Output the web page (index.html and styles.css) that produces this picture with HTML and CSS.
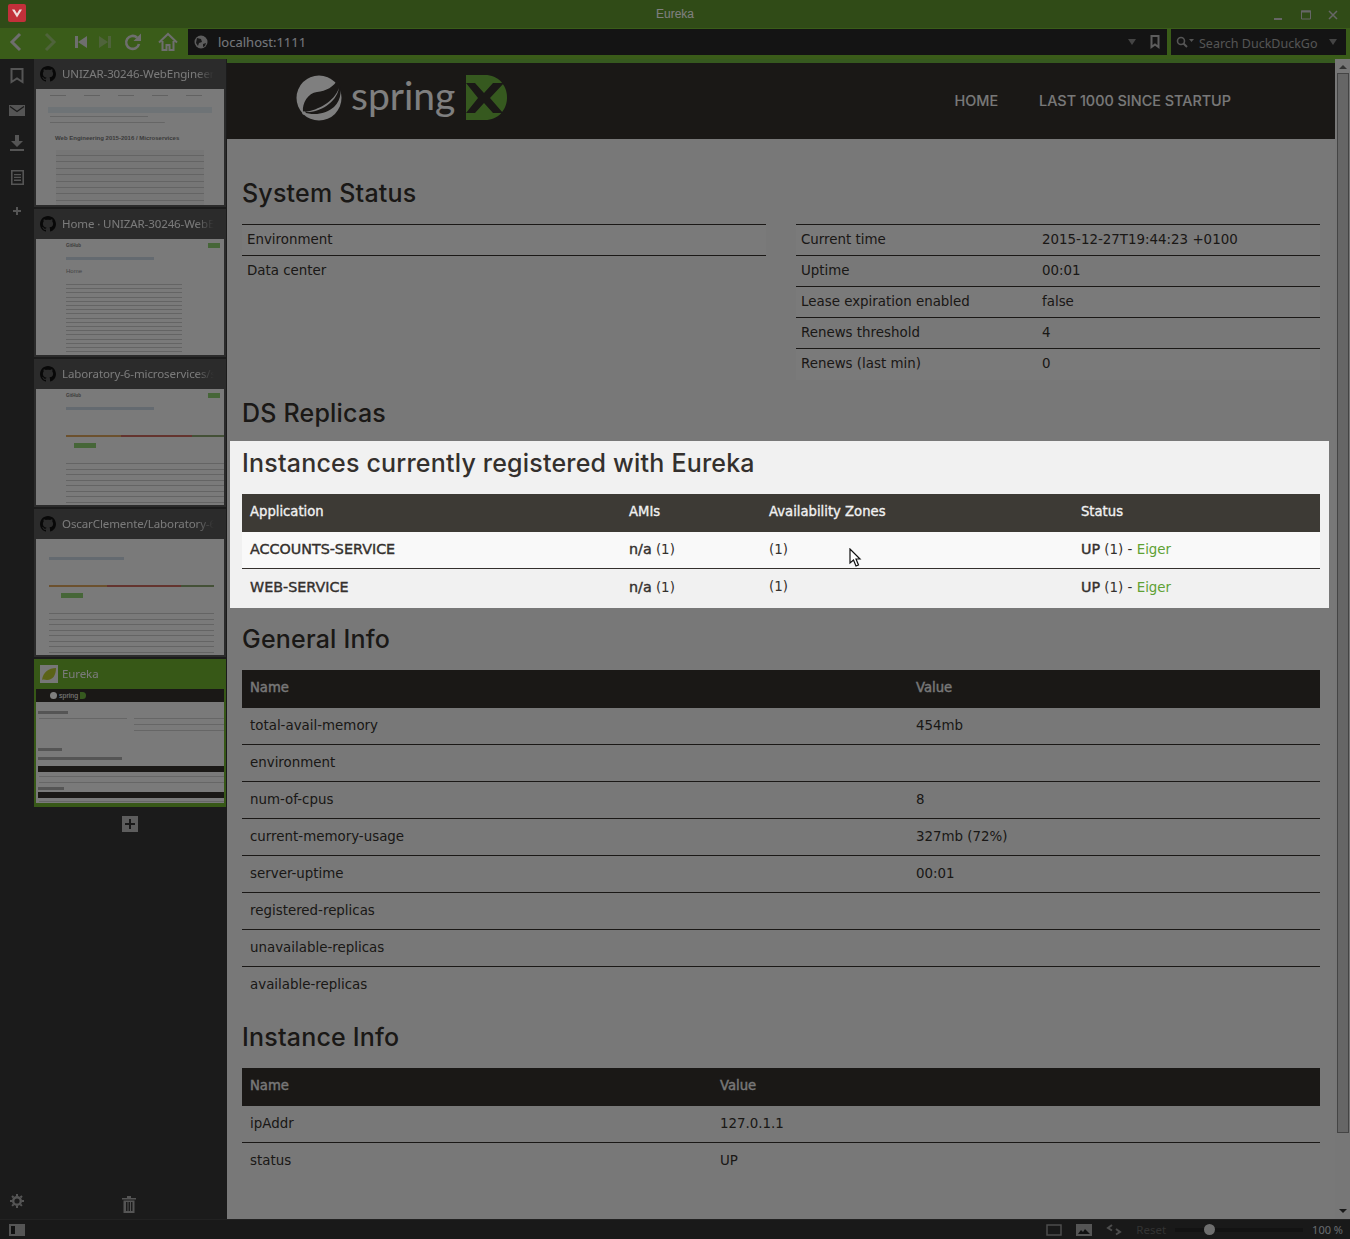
FILE: index.html
```html
<!DOCTYPE html>
<html lang="en">

<head>
 <meta charset="UTF-8">
 <title>Eureka</title>
 <link rel="stylesheet" href="styles.css">
</head>

<body>

 <header class="titlebar">
  <svg class="logo" viewBox="0 0 18 18" width="18" height="18"><rect width="18" height="18" rx="2" fill="#c2303a"/><path d="M4 5.500l5 8 5-8h-2.600L9 9.500 6.600 5.500z" fill="#f0dcdc"/></svg>
  <span class="window-title">Eureka</span>
  <div class="window-btns">
   <svg viewBox="0 0 12 12" width="12" height="12"><rect x="1" y="9" width="8" height="2" fill="#ccc"/></svg>
   <svg viewBox="0 0 12 12" width="12" height="12"><path d="M1.500 2h9v8h-9z" fill="none" stroke="#ccc"/><rect x="1" y="1.500" width="10" height="2" fill="#ccc"/></svg>
   <svg viewBox="0 0 12 12" width="12" height="12"><path d="M2 2l8 8M10 2l-8 8" stroke="#ccc" stroke-width="1.500"/></svg>
  </div>
 </header>

 <div class="toolbar">
  <div class="nav-btns">
   <svg class="btn" viewBox="0 0 22 22" width="22" height="22"><path d="M15 3l-8 8 8 8" fill="none" stroke="#ddd" stroke-width="3"/></svg>
   <svg class="btn off" viewBox="0 0 22 22" width="22" height="22"><path d="M8 3l8 8-8 8" fill="none" stroke="#ddd" stroke-width="3"/></svg>
   <svg class="btn first" viewBox="0 0 14 14" width="14" height="14"><path d="M1 1h3v12H1zM13 1v12L4 7z" fill="#ddd"/></svg>
   <svg class="btn off last" viewBox="0 0 14 14" width="14" height="14"><path d="M13 1h-3v12h3zM1 1v12l9-6z" fill="#ddd"/></svg>
   <svg class="btn" viewBox="0 0 20 20" width="20" height="20"><path d="M16 12a6.500 6.500 0 1 1-2-6.500" fill="none" stroke="#ddd" stroke-width="2.600"/><path d="M18 1.500V9h-7.500z" fill="#ddd"/></svg>
   <svg class="btn home" viewBox="0 0 20 20" width="20" height="20"><path d="M1 10.500L10 2l9 8.500M4.500 9v9h4v-5h3v5h4V9" fill="none" stroke="#ddd" stroke-width="2"/></svg>
  </div>
  <div class="address">
   <svg viewBox="0 0 14 14" width="14" height="14"><circle cx="7" cy="7" r="6.500" fill="#bbb"/><path d="M3 3l4 1 1 3-3 1-1 3-2-3zM9 9l3-1-1 3-2 1z" fill="#333"/></svg>
   <span class="url">localhost:1111</span>
   <span class="caret"></span>
   <svg viewBox="0 0 10 14" width="10" height="14"><path d="M1.500 1h7v11L5 9.500 1.500 12z" fill="none" stroke="#bbb" stroke-width="2"/></svg>
  </div>
  <div class="search">
   <svg viewBox="0 0 18 12" width="18" height="12"><circle cx="5" cy="5" r="3.500" fill="none" stroke="#aaa" stroke-width="1.600"/><path d="M7.500 7.500L11 11" stroke="#aaa" stroke-width="2"/><path d="M13 3h5l-2.500 3z" fill="#aaa"/></svg>
   <span class="search-text">Search DuckDuckGo</span>
   <span class="caret"></span>
  </div>
 </div>

 <div class="workspace">
  <aside class="rail">
   <svg viewBox="0 0 14 16" width="14" height="16"><path d="M1.500 1h11v13L7 10.500 1.500 14z" fill="none" stroke="#aaa" stroke-width="2"/></svg>
   <svg viewBox="0 0 16 11" width="16" height="11"><rect width="16" height="11" fill="#aaa"/><path d="M1 1.500l7 5 7-5" fill="none" stroke="#363636" stroke-width="1.300"/></svg>
   <svg viewBox="0 0 14 16" width="14" height="16"><path d="M5 0h4v6h4L7 12 1 6h4zM0 14h14v2H0z" fill="#aaa"/></svg>
   <svg viewBox="0 0 13 15" width="13" height="15"><path d="M.8.800h11.400v13.400H.8z" fill="none" stroke="#aaa" stroke-width="1.600"/><path d="M3 4h7v1.300H3zM3 6.800h7v1.300H3zM3 9.600h7v1.300H3z" fill="#aaa"/></svg>
   <svg viewBox="0 0 10 10" width="10" height="10"><path d="M4 1h2v3h3v2H6v3H4V6H1V4h3z" fill="#aaa"/></svg>
   <svg class="gear" viewBox="0 0 14 14" width="14" height="14"><circle cx="7" cy="7" r="3.800" fill="none" stroke="#aaa" stroke-width="2.400"/><path d="M7 0v14M0 7h14M2 2l10 10M12 2L2 12" stroke="#aaa" stroke-width="2" stroke-dasharray="2.200 9.600 2.200"/></svg>
  </aside>

  <aside class="tabs">
   <div class="tab">
    <div class="tab-head"><svg class="gh" viewBox="0 0 16 16" width="16" height="16"><use href="#octocat"/></svg><span class="tab-title">UNIZAR-30246-WebEngineer</span></div>
    <div class="thumb thumb-list">
     <div class="mini-bar"></div>
     <div class="mini-note"></div>
     <p class="mini-heading">Web Engineering 2015-2016 / Microservices</p>
     <div class="mini-lines"></div>
    </div>
   </div>
   <div class="tab">
    <div class="tab-head"><svg class="gh" viewBox="0 0 16 16" width="16" height="16"><use href="#octocat"/></svg><span class="tab-title">Home · UNIZAR-30246-WebE</span></div>
    <div class="thumb thumb-wiki">
     <div class="mini-top"><span class="mini-hub">GitHub</span><span class="mini-go"></span></div>
     <div class="mini-crumb"></div>
     <p class="mini-title">Home</p>
     <div class="mini-para"></div>
    </div>
   </div>
   <div class="tab">
    <div class="tab-head"><svg class="gh" viewBox="0 0 16 16" width="16" height="16"><use href="#octocat"/></svg><span class="tab-title">Laboratory-6-microservices/s</span></div>
    <div class="thumb thumb-repo">
     <div class="mini-top"><span class="mini-hub">GitHub</span><span class="mini-go"></span></div>
     <div class="mini-crumb"></div>
     <div class="mini-colors"></div>
     <div class="mini-btn"></div>
     <div class="mini-files"></div>
    </div>
   </div>
   <div class="tab">
    <div class="tab-head"><svg class="gh" viewBox="0 0 16 16" width="16" height="16"><use href="#octocat"/></svg><span class="tab-title">OscarClemente/Laboratory-6</span></div>
    <div class="thumb thumb-repo thumb-fork">
     <div class="mini-top"></div>
     <div class="mini-crumb"></div>
     <div class="mini-colors"></div>
     <div class="mini-btn"></div>
     <div class="mini-files"></div>
    </div>
   </div>
   <div class="tab tab-active">
    <div class="tab-head">
     <svg class="favicon" viewBox="0 0 18 18" width="18" height="18"><rect width="18" height="18" fill="#eee"/><path d="M2 15C3 7 9 3 16 3c0 7-3 12-9 12-2 0-3-1-5 0z" fill="#b7c62e"/></svg>
     <span class="tab-title">Eureka</span>
    </div>
    <div class="thumb thumb-eureka">
     <div class="mini-nav"><span class="mini-leaf"></span><span class="mini-spring">spring</span><span class="mini-x"></span></div>
     <div class="mini-sections"></div>
    </div>
   </div>
   <div class="new-tab"><svg viewBox="0 0 16 16" width="16" height="16"><rect width="16" height="16" fill="#bbb"/><path d="M7 3h2v4h4v2H9v4H7V9H3V7h4z" fill="#333"/></svg></div>
   <svg class="trash" viewBox="0 0 14 17" width="14" height="17"><path d="M0 2h14v1.500H0zM5 0h4v2H5zM1.500 4.500h11V17h-11zM4 6v9h1.500V6zM6.500 6v9h1.500V6zM9 6v9h1.500V6z" fill="#aaa" fill-rule="evenodd"/></svg>
  </aside>

  <main class="page">
   <div class="page-scroll">
    <nav class="brand-bar">
     <div class="brand">
      <svg class="leaf" viewBox="0 0 46 46" width="46" height="46"><circle cx="23" cy="23" r="22.500" fill="#fff"/><path d="M7 37C6 28 12 18 21 17c9-1 17-5 21-13 4 10 4 20-4 28-8 7-20 9-31 5z" fill="#34302d"/><path d="M9 37c13-2 29-10 34-24-3 16-21 25-34 24z" fill="#fff"/><circle cx="8" cy="38" r="1.800" fill="#fff"/></svg>
      <span class="brand-name">spring</span>
      <svg class="brand-x" viewBox="0 0 41 45" width="41" height="45"><path d="M0 0h19c13 0 22 10 22 22.500S32 45 19 45H0z" fill="#6db33f"/><path d="M0 8h9l9 10 9-10h11L24 23l13 15H27l-9-10-9 10H0l12-15z" fill="#34302d"/></svg>
     </div>
     <ul class="menu">
      <li>Home</li>
      <li>Last 1000 since startup</li>
     </ul>
    </nav>

    <div class="content">
     <h2>System Status</h2>
     <div class="status-grid">
      <table class="info">
       <tr><td>Environment</td></tr>
       <tr class="plain"><td>Data center</td></tr>
      </table>
      <table class="info">
       <tr><td class="key">Current time</td><td>2015-12-27T19:44:23 +0100</td></tr>
       <tr><td class="key">Uptime</td><td>00:01</td></tr>
       <tr><td class="key">Lease expiration enabled</td><td>false</td></tr>
       <tr><td class="key">Renews threshold</td><td>4</td></tr>
       <tr><td class="key">Renews (last min)</td><td>0</td></tr>
      </table>
     </div>

     <h2 class="next replicas">DS Replicas</h2>

     <section class="highlight">
      <h2>Instances currently registered with Eureka</h2>
      <table class="data apps">
       <thead>
        <tr><th class="c-app">Application</th><th class="c-ami">AMIs</th><th class="c-zone">Availability Zones</th><th>Status</th></tr>
       </thead>
       <tbody>
        <tr><td><b>ACCOUNTS-SERVICE</b></td><td><b>n/a</b> (1)</td><td>(1)</td><td><b>UP</b> (1) - <a class="link">Eiger</a></td></tr>
        <tr><td><b>WEB-SERVICE</b></td><td><b>n/a</b> (1)</td><td>(1)</td><td><b>UP</b> (1) - <a class="link">Eiger</a></td></tr>
       </tbody>
      </table>
     </section>

     <h2 class="after">General Info</h2>
     <table class="data general">
      <thead><tr><th class="c-name">Name</th><th>Value</th></tr></thead>
      <tbody>
       <tr><td>total-avail-memory</td><td>454mb</td></tr>
       <tr><td>environment</td><td></td></tr>
       <tr><td>num-of-cpus</td><td>8</td></tr>
       <tr><td>current-memory-usage</td><td>327mb (72%)</td></tr>
       <tr><td>server-uptime</td><td>00:01</td></tr>
       <tr><td>registered-replicas</td><td></td></tr>
       <tr><td>unavailable-replicas</td><td></td></tr>
       <tr><td>available-replicas</td><td></td></tr>
      </tbody>
     </table>

     <h2 class="next">Instance Info</h2>
     <table class="data instance">
      <thead><tr><th class="c-ip">Name</th><th>Value</th></tr></thead>
      <tbody>
       <tr><td>ipAddr</td><td>127.0.1.1</td></tr>
       <tr><td>status</td><td>UP</td></tr>
      </tbody>
     </table>
    </div>
   </div>

   <div class="scrollbar">
    <span class="arrow-up"></span>
    <div class="scroll-thumb"></div>
    <span class="arrow-down"></span>
   </div>
  </main>
 </div>

 <footer class="statusbar">
  <svg class="panel-toggle" viewBox="0 0 16 12" width="16" height="12"><rect width="16" height="12" fill="#aaa"/><rect x="2" y="2" width="4" height="8" fill="#222"/></svg>
  <div class="status-right">
   <svg viewBox="0 0 16 12" width="16" height="12"><rect x="1" y="1" width="14" height="10" fill="none" stroke="#999" stroke-width="1.500"/></svg>
   <svg viewBox="0 0 16 12" width="16" height="12"><rect width="16" height="12" fill="#aaa"/><path d="M2 10l3-4 2 2 2-3 5 5z" fill="#222"/></svg>
   <svg viewBox="0 0 16 12" width="16" height="12"><path d="M6 1L2 4l4 2.500M10 5l4 3-4 2.500" fill="none" stroke="#999" stroke-width="2"/></svg>
   <span class="reset">Reset</span>
   <div class="slider"><span class="knob"></span></div>
   <span class="zoom">100 %</span>
  </div>
 </footer>

 <svg class="cursor" viewBox="0 0 13 20" width="13" height="20"><path d="M1 1v14l3.500-3 2.500 6 2.500-1-2.500-6H11z" fill="#fff" stroke="#111" stroke-width="1.200"/></svg>

 <svg class="defs" width="0" height="0"><symbol id="octocat" viewBox="0 0 16 16"><path d="M8 0C3.600 0 0 3.600 0 8c0 3.500 2.300 6.500 5.500 7.600.4.100.5-.2.500-.4v-1.400c-2.200.5-2.700-1-2.700-1-.4-.9-.9-1.200-.9-1.200-.7-.5.100-.5.100-.5.800.100 1.200.8 1.200.8.700 1.200 1.900.9 2.300.7.100-.5.300-.9.500-1.100-1.800-.2-3.600-.9-3.600-4 0-.9.300-1.600.8-2.100-.1-.2-.4-1 .1-2.100 0 0 .7-.2 2.200.8.6-.2 1.300-.3 2-.3s1.400.1 2 .3c1.500-1 2.200-.8 2.200-.8.4 1.100.2 1.900.1 2.100.5.600.8 1.300.8 2.100 0 3.100-1.900 3.700-3.700 3.900.3.300.6.800.6 1.500v2.200c0 .2.100.5.600.4C13.700 14.500 16 11.500 16 8c0-4.400-3.600-8-8-8z" fill="#111"/></symbol></svg>

</body>

</html>
```
FILE: styles.css
```css
* {
 box-sizing: border-box;
}

html,
body {
 height: 100%;
}

body {
 margin: 0;
 overflow: hidden;
 display: flex;
 flex-direction: column;
 font-family: 'DejaVu Sans', Verdana, sans-serif;
 color: #34302d;
 background-color: #363636;
}

/* window chrome */
.titlebar {
 height: 28px;
 flex: none;
 display: flex;
 align-items: center;
 justify-content: center;
 background-color: #60962f;
}

.logo {
 position: absolute;
 top: 4px;
 left: 8px;
 z-index: 10;
}

.window-title {
 font-family: 'Liberation Sans', Arial, sans-serif;
 font-size: 12px;
 color: #fff;
}

.window-btns {
 position: absolute;
 top: 9px;
 right: 11px;
 display: flex;
 gap: 15px;
}

.toolbar {
 height: 31px;
 flex: none;
 display: flex;
 align-items: flex-start;
 background-color: #74b832;
}

.nav-btns {
 width: 188px;
 height: 27px;
 flex: none;
 display: flex;
 align-items: center;
 padding-left: 5px;
 gap: 11px;
}

.nav-btns .first {
 margin-left: 3px;
}

.nav-btns .last {
 margin-left: -1px;
}

.nav-btns .home {
 margin-left: 4px;
}

.nav-btns .off {
 opacity: 0.4;
}

.address,
.search {
 height: 26px;
 margin-top: 1px;
 display: flex;
 align-items: center;
 background-color: #282828;
}

.address {
 width: 979px;
 padding: 0 7px 0 6px;
}

.url {
 flex: 1;
 margin-left: 10px;
 font-family: 'Noto Sans', sans-serif;
 font-size: 13px;
 color: #e8eef6;
}

.caret {
 width: 0;
 height: 0;
 border: 4px solid transparent;
 border-top: 6px solid #888;
 border-bottom: 0;
}

.address .caret {
 margin-right: 14px;
}

.search {
 width: 175px;
 margin-left: 4px;
 padding: 0 9px 0 5px;
}

.search-text {
 flex: 1;
 margin: 2px 0 0 5px;
 font-family: 'Noto Sans', sans-serif;
 font-size: 12.500px;
 color: #aaa;
 white-space: nowrap;
}

.workspace {
 flex: 1;
 min-height: 0;
 display: flex;
}

.rail {
 position: relative;
 width: 34px;
 flex: none;
 display: flex;
 flex-direction: column;
 align-items: center;
 padding-top: 9px;
 gap: 19px;
 background-color: #363636;
}

.rail svg:nth-child(2),
.rail svg:nth-child(5) {
 margin-top: 2px;
}

.gear {
 position: absolute;
 bottom: 11px;
 left: 10px;
}

/* tab stack with thumbnails */
.tabs {
 position: relative;
 width: 193px;
 flex: none;
 display: flex;
 flex-direction: column;
 background-color: #363636;
}

.tab {
 width: 192px;
 height: 148px;
 flex: none;
 margin-bottom: 2px;
 background-color: #565656;
}

.tab-head {
 height: 30px;
 display: flex;
 align-items: center;
 padding: 0 0 1px 6px;
 gap: 6px;
 overflow: hidden;
}

.gh,
.favicon {
 flex: none;
}

.favicon {
 margin-right: -2px;
}

.tab-title {
 font-family: 'Noto Sans', sans-serif;
 font-size: 11.500px;
 letter-spacing: -0.1px;
 color: #f4f4f4;
 white-space: nowrap;
 width: 152px;
 -webkit-mask-image: linear-gradient(90deg, #000 88%, transparent);
 mask-image: linear-gradient(90deg, #000 88%, transparent);
}

.tab-active {
 background-color: #6fb02f;
}

.thumb {
 width: 188px;
 height: 116px;
 margin-left: 2px;
 overflow: hidden;
 background-color: #f4f4f4;
 font-family: 'Liberation Sans', Arial, sans-serif;
}

.mini-bar {
 height: 7px;
 margin: 3px 14px 0;
 background: repeating-linear-gradient(90deg, #c4c4c4 0 16px, #f4f4f4 16px 34px) 0 3px / 100% 1px no-repeat;
}

.mini-note {
 height: 26px;
 margin: 2px 12px 0;
 background:
  linear-gradient(#dde6ec, #dde6ec) 0 6px / 100% 6px no-repeat,
  linear-gradient(#ccc, #ccc) 2px 15px / 60% 1px no-repeat,
  linear-gradient(#ccc, #ccc) 2px 21px / 70% 1px no-repeat;
}

.mini-heading {
 margin: 8px 0 0 19px;
 font-size: 6px;
 font-weight: bold;
 color: #777;
 white-space: nowrap;
}

.mini-lines {
 height: 56px;
 margin: 9px 20px 0;
 background: repeating-linear-gradient(#ececec 0 5px, #c8c8c8 5px 6px, #ececec 6px 6.400px);
}

.mini-top {
 height: 12px;
 display: flex;
 justify-content: space-between;
 align-items: center;
 padding: 0 0 0 30px;
}

.mini-hub {
 font-size: 4.500px;
 font-weight: bold;
 color: #777;
}

.mini-go {
 width: 12px;
 height: 5px;
 margin-right: 4px;
 background-color: #8ccc70;
}

.mini-crumb {
 height: 3px;
 margin: 6px 70px 0 30px;
 background-color: #c8d4e0;
}

.mini-title {
 margin: 8px 0 0 30px;
 font-size: 6px;
 color: #888;
}

.mini-para {
 height: 72px;
 margin: 10px 42px 0 30px;
 background: repeating-linear-gradient(#c8c8c8 0 1px, #f4f4f4 1px 4.200px);
}

.mini-colors {
 height: 2px;
 margin: 25px 0 0 30px;
 background: linear-gradient(90deg, #d9a25d 0 35%, #c9695c 35% 80%, #88a36f 80%);
}

.mini-btn {
 width: 22px;
 height: 5px;
 margin: 6px 0 0 38px;
 background-color: #8ccc70;
}

.mini-files {
 height: 56px;
 margin: 12px 0 0 30px;
 background: repeating-linear-gradient(#f4f4f4 0 3px, #c8c8c8 3px 4px, #f4f4f4 4px 5.500px);
}

.thumb-fork .mini-crumb,
.thumb-fork .mini-colors,
.thumb-fork .mini-files {
 margin-left: 13px;
 margin-right: 10px;
}

.thumb-fork .mini-crumb {
 margin-right: 100px;
}

.thumb-fork .mini-btn {
 margin-left: 25px;
}

.thumb-fork .mini-files {
 height: 54px;
}

.thumb-eureka {
 height: 114px;
}

.mini-nav {
 height: 13px;
 display: flex;
 align-items: center;
 padding-left: 14px;
 gap: 2px;
 background-color: #34302d;
}

.mini-leaf {
 width: 7px;
 height: 7px;
 border-radius: 50%;
 background-color: #fff;
}

.mini-spring {
 font-size: 7px;
 color: #fff;
}

.mini-x {
 width: 6px;
 height: 7px;
 border-radius: 0 4px 4px 0;
 background-color: #6db33f;
}

.mini-sections {
 height: 101px;
 background:
  linear-gradient(#aaa, #aaa) 2px 9px / 30px 3px no-repeat,
  linear-gradient(#ccc, #ccc) 3px 16px / 88px 1px no-repeat,
  linear-gradient(#ccc, #ccc) 98px 16px / 90px 1px no-repeat,
  linear-gradient(#ccc, #ccc) 98px 22px / 90px 1px no-repeat,
  linear-gradient(#ccc, #ccc) 98px 28px / 90px 1px no-repeat,
  linear-gradient(#aaa, #aaa) 2px 46px / 24px 3px no-repeat,
  linear-gradient(#aaa, #aaa) 2px 55px / 84px 3px no-repeat,
  linear-gradient(#34302d, #34302d) 2px 64px / 186px 6px no-repeat,
  linear-gradient(#ccc, #ccc) 3px 74px / 186px 1px no-repeat,
  linear-gradient(#ccc, #ccc) 3px 80px / 186px 1px no-repeat,
  linear-gradient(#aaa, #aaa) 2px 85px / 26px 3px no-repeat,
  linear-gradient(#34302d, #34302d) 2px 90px / 186px 6px no-repeat,
  linear-gradient(#ccc, #ccc) 3px 99px / 186px 1px no-repeat;
}

.new-tab {
 display: flex;
 justify-content: center;
 margin-top: 7px;
 margin-right: 1px;
}

.trash {
 position: absolute;
 bottom: 6px;
 left: 88px;
}

/* the web page */
.page {
 flex: 1;
 min-width: 0;
 display: flex;
 background-color: #f1f1f1;
}

.page-scroll {
 flex: 1;
 min-width: 0;
 border-top: 4px solid #6db33f;
}

.brand-bar {
 height: 76px;
 display: flex;
 justify-content: space-between;
 background-color: #34302d;
}

.brand {
 display: flex;
 align-items: flex-start;
 padding: 11px 0 0 69px;
}

.leaf {
 margin-top: 1px;
}

.brand-name {
 margin: -4px 0 0 9px;
 font-family: 'Lato', sans-serif;
 font-size: 39px;
 line-height: 50px;
 color: #fff;
}

.brand-x {
 margin: 1px 0 0 11px;
}

.menu {
 display: flex;
 gap: 41px;
 margin: 0;
 padding: 29px 104px 0 0;
 list-style: none;
 font-family: 'Inter', sans-serif;
 font-size: 14.400px;
 font-weight: 500;
 line-height: 18px;
 text-transform: uppercase;
 color: #f1f1f1;
}

.content {
 padding: 37px 15px 0;
}

h2 {
 margin: 0 0 14px;
 font-family: 'Inter', sans-serif;
 font-size: 25px;
 font-weight: 500;
 letter-spacing: 0.2px;
 line-height: 34px;
 color: #34302d;
}

h2.next {
 margin-top: 16px;
}

h2.replicas {
 margin-bottom: 11px;
}

h2.after {
 margin-top: 14px;
}

table {
 width: 100%;
 border-collapse: collapse;
 font-size: 13.400px;
}

td,
th {
 padding: 0 8px;
 text-align: left;
 white-space: nowrap;
}

.status-grid {
 display: grid;
 grid-template-columns: 1fr 1fr;
 gap: 30px;
 align-items: start;
}

.info {
 border-top: 1px solid #34302d;
}

.info td {
 height: 31px;
 padding: 0 5px 2px;
 border-bottom: 1px solid #34302d;
}

.info tr:nth-child(odd) {
 background-color: #f4f4f4;
}

.info tr:last-child td {
 border-bottom: 0;
}

.info .key {
 width: 241px;
}

.highlight {
 position: relative;
 z-index: 5;
 margin: 0 -9px 0 -12px;
 padding: 5px 9px 2px 12px;
 background-color: #f1f1f1;
 box-shadow: 0 0 0 1400px rgba(0, 0, 0, 0.5);
}

.data th {
 height: 38px;
 padding-bottom: 3px;
 font-size: 13.200px;
 font-weight: normal;
 -webkit-text-stroke: 0.35px #f1f1f1;
 color: #f1f1f1;
 background-color: #34302d;
}

.data b {
 font-size: 14.300px;
 font-weight: normal;
 -webkit-text-stroke: 0.4px #34302d;
}

.apps th {
 background-color: #3d3a35;
}

.data td {
 height: 37px;
 padding-bottom: 1px;
 border-bottom: 1px solid #34302d;
}

.data tbody tr:last-child td {
 border-bottom: 0;
}

.apps tbody tr:first-child {
 background-color: #f9f9f9;
}

.c-app {
 width: 379px;
}

.c-ami {
 width: 140px;
}

.c-zone {
 width: 312px;
}

.c-name {
 width: 666px;
}

.c-ip {
 width: 470px;
}

.link {
 color: #5fa134;
}

/* scrollbar on the right */
.scrollbar {
 width: 15px;
 flex: none;
 display: flex;
 flex-direction: column;
 align-items: center;
 background-color: #eee;
}

.arrow-up,
.arrow-down {
 width: 0;
 height: 0;
 margin: 6px 0 0;
 border: 4px solid transparent;
 border-bottom: 4px solid #666;
 border-top: 0;
}

.arrow-down {
 margin: auto 0 6px;
 border-bottom: 0;
 border-top: 4px solid #333;
}

.scroll-thumb {
 width: 12px;
 height: 1060px;
 margin-top: 4px;
 background-color: #ccc;
 border: 1px solid #888;
}

.statusbar {
 height: 20px;
 flex: none;
 display: flex;
 justify-content: space-between;
 align-items: center;
 padding: 0 7px 0 9px;
 border-top: 1px solid #444;
 background-color: #323232;
}

.status-right {
 display: flex;
 align-items: center;
}

.status-right svg {
 margin-right: 14px;
}

.reset {
 font-family: 'Noto Sans', sans-serif;
 font-size: 11.500px;
 color: #666;
}

.slider {
 position: relative;
 width: 128px;
 height: 4px;
 margin: 0 9px 0 9px;
 background-color: #262626;
}

.knob {
 position: absolute;
 top: -4px;
 left: 29px;
 width: 11px;
 height: 11px;
 border-radius: 50%;
 background-color: #ddd;
}

.zoom {
 font-family: 'Noto Sans', sans-serif;
 font-size: 11px;
 color: #cfd6de;
}

.cursor {
 position: absolute;
 top: 548px;
 left: 849px;
 z-index: 12;
}

.defs {
 position: absolute;
}
```
